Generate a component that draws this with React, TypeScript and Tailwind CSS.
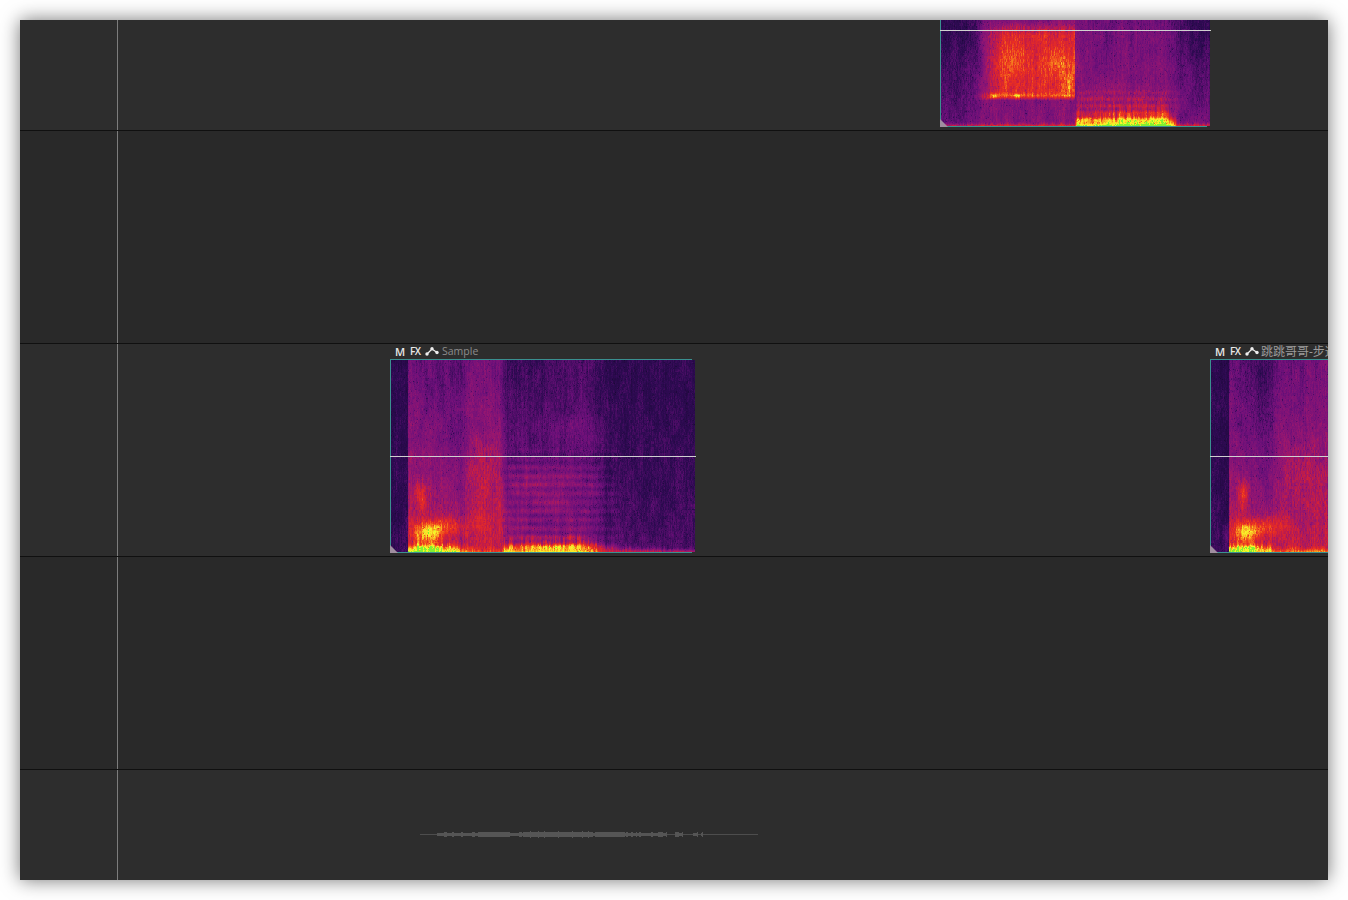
import { useMemo } from "react";
import type { ReactNode } from "react";

type Cell = (x: number, y: number, w: number, h: number) => number;

const rnd = (a: number, b: number) => {
  const n = Math.sin(a * 127.1 + b * 311.7) * 43758.5453;
  return n - Math.floor(n);
};

// bilinear value noise, for the soft blotches
const smooth = (x: number, y: number) => {
  const ix = Math.floor(x);
  const iy = Math.floor(y);
  const fx = x - ix;
  const fy = y - iy;
  const a = rnd(ix, iy) + (rnd(ix + 1, iy) - rnd(ix, iy)) * fx;
  const b = rnd(ix, iy + 1) + (rnd(ix + 1, iy + 1) - rnd(ix, iy + 1)) * fx;
  return a + (b - a) * fy;
};

const blob = (x: number, y: number, cx: number, cy: number, rx: number, ry: number, a: number) =>
  a * Math.exp(-(((x - cx) / rx) ** 2) - ((y - cy) / ry) ** 2);

// [x, top level, bottom level]
const lerpTable = (table: number[][], x: number) => {
  for (let i = 1; i < table.length; i++) {
    if (x <= table[i][0]) {
      const a = table[i - 1];
      const b = table[i];
      const t = (x - a[0]) / Math.max(b[0] - a[0], 0.001);
      return a.map((v, k) => v + (b[k] - v) * t);
    }
  }
  return table[table.length - 1];
};

// thin bright band at the bottom of the clip: [x, amplitude, height]
const strip = (table: number[][], x: number, y: number, h: number) => {
  const [, amp, size] = lerpTable(table, x);
  const d = h - y;
  const wobble = 0.7 + 0.6 * rnd(Math.floor(x / 2), 9);
  return amp * Math.exp(-((d / (size * wobble)) ** 2));
};

const stops: [number, number[]][] = [
  [0, [26, 8, 54]],
  [0.18, [46, 10, 82]],
  [0.34, [108, 16, 122]],
  [0.48, [150, 22, 112]],
  [0.62, [204, 30, 62]],
  [0.74, [234, 48, 32]],
  [0.84, [245, 120, 30]],
  [0.93, [250, 225, 40]],
  [0.975, [245, 250, 40]],
  [1, [130, 240, 50]],
];

const levels = 72;

const colorAt = (v: number) => {
  for (let i = 1; i < stops.length; i++) {
    if (v <= stops[i][0]) {
      const [p, a] = stops[i - 1];
      const [q, b] = stops[i];
      const t = (v - p) / (q - p);
      return `rgb(${a.map((c, k) => Math.round(c + (b[k] - c) * t)).join(",")})`;
    }
  }
  return "rgb(130,240,50)";
};

const sampleBase = [
  [0, 0.13, 0.17],
  [16, 0.13, 0.18],
  [17, 0.34, 0.58],
  [30, 0.31, 0.58],
  [64, 0.27, 0.54],
  [70, 0.26, 0.46],
  [76, 0.36, 0.58],
  [108, 0.36, 0.58],
  [116, 0.2, 0.42],
  [200, 0.24, 0.4],
  [216, 0.16, 0.25],
  [304, 0.14, 0.22],
];

const sampleStrip = [
  [0, 0, 2],
  [16, 0, 2],
  [17, 0.4, 8],
  [68, 0.4, 8],
  [78, 0.2, 4],
  [110, 0.16, 4],
  [113, 0.5, 8],
  [190, 0.54, 10],
  [205, 0.48, 9],
  [215, 0.38, 6],
  [245, 0.32, 4],
  [304, 0.3, 3],
];

const sample: Cell = (x, y, w, h) => {
  const [, top, bottom] = lerpTable(sampleBase, x);
  let v = top + (bottom - top) * Math.pow(y / h, 1.4);
  v += blob(x, y, 30, 135, 6, 14, 0.22);
  v += blob(x, y, 36, 172, 15, 11, 0.36);
  v += blob(x, y, 58, 166, 22, 9, 0.18);
  v += blob(x, y, 90, 105, 16, 26, 0.07);
  v += blob(x, y, 95, 150, 22, 32, 0.05);
  v += blob(x, y, 38, 187, 16, 2.5, 0.1);
  v += blob(x, y, 160, 187, 22, 2.5, 0.09);
  v += blob(x, y, 175, 65, 28, 8, 0.05);
  if (x > 108 && x < 235 && y > 80) {
    const fade = Math.min(1, (235 - x) / 40, (x - 108) / 14, (y - 80) / 25);
    const broken = smooth(x / 18, y / 8);
    v += (0.05 * Math.sin(y * 0.72) + blob(x, y, 150, 125, 45, 24, 0.12)) * fade * (0.4 + broken);
  }
  return v + strip(sampleStrip, x, y, h);
};

const nextBase = [
  [0, 0.13, 0.17],
  [17, 0.13, 0.18],
  [18, 0.32, 0.58],
  [38, 0.25, 0.54],
  [60, 0.2, 0.52],
  [64, 0.32, 0.55],
  [118, 0.37, 0.58],
];

const nextStrip = [
  [0, 0, 2],
  [17, 0, 2],
  [18, 0.4, 8],
  [58, 0.4, 8],
  [62, 0.26, 4],
  [118, 0.26, 4],
];

const next: Cell = (x, y, w, h) => {
  const [, top, bottom] = lerpTable(nextBase, x);
  let v = top + (bottom - top) * Math.pow(y / h, 1.4);
  v += blob(x, y, 32, 135, 6, 14, 0.22);
  v += blob(x, y, 34, 172, 15, 11, 0.36);
  v += blob(x, y, 56, 166, 20, 9, 0.18);
  v += blob(x, y, 92, 110, 20, 28, 0.08);
  v += blob(x, y, 36, 187, 16, 2.5, 0.1);
  return v + strip(nextStrip, x, y, h);
};

const topBase = [
  [0, 0.14, 0.28],
  [30, 0.17, 0.32],
  [42, 0.3, 0.38],
  [133, 0.33, 0.4],
  [136, 0.32, 0.42],
  [225, 0.34, 0.44],
  [245, 0.17, 0.34],
  [269, 0.14, 0.34],
];

const topStrip = [
  [0, 0.28, 2.5],
  [133, 0.28, 2.5],
  [136, 0.5, 10],
  [150, 0.44, 8],
  [165, 0.5, 12],
  [230, 0.52, 12],
  [236, 0.3, 3],
  [269, 0.28, 3],
];

const topClip: Cell = (x, y, w, h) => {
  const [, t, b] = lerpTable(topBase, x);
  let v = t + (b - t) * (y / h);
  if (x > 36 && x < 134 && y < 80) {
    const edge = Math.min(1, (x - 36) / 24, (80 - y) / 5);
    v += 0.3 * edge * Math.min(1, (y + 4) / 18);
  }
  if (x > 32 && x < 134) v += blob(x, y, 80, 76, 55, 3, 0.14);
  v += blob(x, y, 72, 40, 16, 20, 0.14);
  v += blob(x, y, 118, 42, 17, 15, 0.14);
  v += blob(x, y, 52, 75, 4, 3, 0.18);
  v += blob(x, y, 75, 75, 4, 3, 0.14);
  v += blob(x, y, 128, 65, 4, 12, 0.2);
  if (x > 135 && x < 240 && y > 62) {
    const ramp = Math.min(1, (y - 62) / 14, (240 - x) / 20);
    v += (0.08 + 0.04 * Math.sin(y * 0.9)) * ramp;
  }
  v += blob(x, y, 147, 98, 6, 3, 0.14);
  return v + strip(topStrip, x, y, h);
};

function Spectrogram({ w, h, cell, seed }: { w: number; h: number; cell: Cell; seed: number }) {
  // one path per colour level, so the svg stays small
  const paths = useMemo(() => {
    const buckets: string[] = Array.from({ length: levels + 1 }, () => "");
    for (let x = 0; x < w; x++) {
      const streak = rnd(x + seed, 3) - 0.5;
      for (let y = 0; y < h; y++) {
        const base = cell(x, y, w, h);
        // louder parts of the picture are streakier
        const loud = base > 0.45 && base < 0.85 ? 1.5 : 1;
        const patch = smooth(x / 5 + seed, y / 16) - 0.5;
        const grain = rnd(x + seed, Math.floor(y / 3)) - 0.5;
        const fine = rnd(y + seed, x) - 0.5;
        const speck = rnd(y + seed + 5, x) > 0.975 ? -0.1 : 0;
        const v = 0.02 + base + patch * 0.09 + (streak * 0.04 + grain * 0.08) * loud + fine * 0.05 + speck;
        const i = Math.round(Math.max(0, Math.min(1, v)) * levels);
        buckets[i] += `M${x} ${y}h1v1h-1z`;
      }
    }
    return buckets;
  }, [w, h, cell, seed]);

  return (
    <svg width={w} height={h} viewBox={`0 0 ${w} ${h}`} shapeRendering="crispEdges" className="block shrink-0">
      {paths.map((d, i) => (d ? <path key={i} d={d} fill={colorAt(i / levels)} /> : null))}
    </svg>
  );
}

function ClipHeader({ name, nameClass }: { name: string; nameClass: string }) {
  return (
    <div className="h-[15px] flex items-center pl-[5px] whitespace-nowrap leading-[15px] font-['Open_Sans','Noto_Sans_CJK_SC',sans-serif]">
      <span className="w-[15px] shrink-0 text-[11px] text-[#e8e8e8] font-semibold">M</span>
      <span className="w-[15px] shrink-0 text-[10px] text-[#e8e8e8] font-semibold tracking-[-0.6px]">FX</span>
      <svg width="14" height="12" viewBox="0 0 14 12" className="shrink-0 mb-[2px]">
        <path d="M2 9 L7 4 L12 7.5" stroke="#eeeeee" strokeWidth="1.3" fill="none" />
        <circle cx="2" cy="9" r="1.7" fill="#eeeeee" />
        <circle cx="7" cy="3.8" r="1.7" fill="#eeeeee" />
        <circle cx="12" cy="7.5" r="1.7" fill="#eeeeee" />
      </svg>
      <span className={nameClass}>{name}</span>
    </div>
  );
}

function Clip({
  w,
  h,
  cell,
  seed,
  lineY,
  tealW,
}: {
  w: number;
  h: number;
  cell: Cell;
  seed: number;
  lineY: number;
  tealW: number;
}) {
  return (
    <div className="relative shrink-0 pl-[1px]" style={{ width: w + 1 }}>
      <Spectrogram w={w} h={h} cell={cell} seed={seed} />
      <div className="absolute left-0 top-0 bottom-0 w-[1px] bg-[#3a9090]" />
      <div className="absolute left-0 bottom-[-1px] h-[1px] bg-[#3a9090]" style={{ width: tealW }} />
      <div className="absolute left-0 right-[-1px] h-[1px] bg-[#d0d0d0]" style={{ top: lineY }} />
      <svg width="9" height="8" viewBox="0 0 9 8" className="absolute left-0 bottom-[-1px]">
        <path d="M0 0 L8 8 H0 Z" fill="#a08fa0" />
      </svg>
    </div>
  );
}

function Waveform() {
  const d = useMemo(() => {
    const peaks: [number, number, number][] = [
      [17, 60, 1.3],
      [60, 110, 1.7],
      [110, 170, 2],
      [170, 205, 1.8],
      [205, 247, 1.3],
      [255, 263, 1.4],
      [273, 278, 1.5],
      [281, 283, 1.5],
    ];
    let s = "";
    for (const [a, b, amp] of peaks) {
      for (let x = a; x < b; x++) {
        const k = Math.round(amp * (0.75 + 0.6 * smooth(x / 2, 21)));
        s += `M${x} ${5 - k}h1v${k * 2 + 1}h-1z`;
      }
    }
    return s;
  }, []);
  return (
    <svg width="338" height="11" viewBox="0 0 338 11" shapeRendering="crispEdges" className="block">
      <rect x="0" y="5" width="338" height="1" fill="#4d4d4d" />
      <path d={d} fill="#555555" />
    </svg>
  );
}

function Row({
  height,
  shade,
  last,
  children,
  className,
}: {
  height: string;
  shade: string;
  last?: boolean;
  children?: ReactNode;
  className?: string;
}) {
  return (
    <div className={`flex ${height} ${shade} ${last ? "" : "border-b border-[#101010]"}`}>
      <div className="w-[98px] shrink-0 border-r border-[#7c7c7c]" />
      <div className={`flex-1 min-w-0 overflow-hidden ${className ?? ""}`}>{children}</div>
    </div>
  );
}

export default function App() {
  return (
    <div className="w-[1348px] h-[900px] bg-white p-[20px] overflow-hidden">
      <div className="w-[1308px] h-[860px] flex flex-col shadow-[0_0_18px_rgba(0,0,0,0.55)]">
        <Row height="h-[111px]" shade="bg-[#2d2d2d]" className="flex items-end pb-[4px] pl-[822px]">
          <Clip w={269} h={106} cell={topClip} seed={51} lineY={10} tealW={267} />
        </Row>
        <Row height="h-[213px]" shade="bg-[#292929]" />
        <Row height="h-[213px]" shade="bg-[#2d2d2d]" className="flex pl-[272px]">
          <div className="w-[305px] shrink-0">
            <ClipHeader name="Sample" nameClass="ml-[3px] text-[10.5px] text-[#8c8c8c]" />
            <div className="h-[1px] w-[302px] bg-[#3a9090]" />
            <Clip w={304} h={192} cell={sample} seed={7} lineY={96} tealW={302} />
          </div>
          <div className="w-[119px] ml-[515px] shrink-0 overflow-hidden">
            <ClipHeader name="跳跳哥哥-步道" nameClass="ml-[2px] shrink-0 text-[12px] text-[#9c9c9c]" />
            <div className="h-[1px] w-[118px] bg-[#3a9090]" />
            <Clip w={118} h={192} cell={next} seed={19} lineY={96} tealW={118} />
          </div>
        </Row>
        <Row height="h-[213px]" shade="bg-[#292929]" />
        <Row height="h-[110px]" shade="bg-[#2d2d2d]" last className="pl-[302px] pt-[59px]">
          <Waveform />
        </Row>
      </div>
    </div>
  );
}
